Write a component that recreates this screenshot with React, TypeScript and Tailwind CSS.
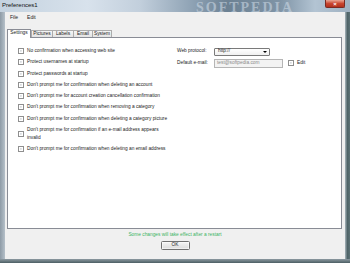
import React from "react";

function Check() {
  return (
    <div className="w-[6px] h-[6px] shrink-0 border border-[#8f8f8f] bg-white p-[1px]">
      <div className="w-full h-full bg-gradient-to-br from-[#cfd3d8] to-[#f4f4f4]" />
    </div>
  );
}

function Row({ children }: { children: React.ReactNode }) {
  return (
    <div className="flex items-center gap-[3px] whitespace-nowrap">
      <Check />
      <div className="leading-[8px]">{children}</div>
    </div>
  );
}

function Tab({ label, active }: { label: string; active?: boolean }) {
  return active ? (
    <div className="h-[9.5px] w-[24px] -mb-[1px] z-10 border border-b-0 border-[#898c95] bg-white flex items-center justify-center leading-none">
      {label}
    </div>
  ) : (
    <div className="h-[7px] border border-b-0 border-[#acacac] bg-gradient-to-b from-[#f6f6f6] to-[#e3e3e3] flex items-center justify-center leading-none -ml-[1px]">
      {label}
    </div>
  );
}

export default function App() {
  return (
    <div
      className="w-[350px] h-[263px] flex flex-col overflow-hidden relative bg-[#6f818c] text-[#1b1b1b]"
      style={{ fontFamily: '"Liberation Sans", Arial, sans-serif' }}
    >
      {/* title bar */}
      <div className="h-[12px] relative bg-[linear-gradient(to_right,#c4d2df_0%,#d8e2ec_25%,#c2cfdc_40%,#8ea2b4_55%,#6c8193_65%,#7f94a6_80%,#b3c4d3_90%,#9fb1c1_100%)]">
        <div className="absolute left-[2px] top-[1px] text-[6px] leading-[8px] text-[#111]">Preferences1</div>
        <div
          className="absolute left-[196px] top-[-3px] text-[14px] font-bold tracking-[2px] text-[#c9d6e2] opacity-60"
          style={{ fontFamily: '"Liberation Serif", serif' }}
        >
          SOFTPEDIA
        </div>
        <div className="absolute right-[5px] top-0 w-[20px] h-[8px] rounded-b-[2px] border border-t-0 border-[#7a2a22] bg-gradient-to-b from-[#e8a493] via-[#c9452f] to-[#b2301c] flex items-center justify-center text-white text-[6px] font-bold leading-none">
          ×
        </div>
      </div>
      <div className="flex flex-1">
        <div className="w-[5px] bg-gradient-to-r from-[#8e9ba6] to-[#b5c0c9]" />
        <div className="flex-1 bg-[#f0f0f0] flex flex-col text-[4.8px]">
          {/* menu */}
          <div className="h-[12px] flex items-center gap-[9px] pl-[5px] text-[5px]">
            <span>File</span>
            <span>Edit</span>
          </div>
          {/* tabs */}
          <div className="h-[4px]" />
          <div className="flex items-end ml-[2px] h-[9px]">
            <Tab label="Settings" active />
            <div className="w-[1px]" />
            <div className="flex items-end">
              <div className="w-[21px]"><Tab label="Pictures" /></div>
              <div className="w-[21px]"><Tab label="Labels" /></div>
              <div className="w-[19px]"><Tab label="Email" /></div>
              <div className="w-[19px]"><Tab label="System" /></div>
            </div>
          </div>
          {/* panel */}
          <div className="ml-[2px] w-[335px] h-[192px] border border-[#898c95] bg-white flex pt-[9px] pl-[10px]">
            <div className="flex flex-col gap-[3.3px] w-[159px]">
              <Row>No confirmation when accessing web site</Row>
              <Row>Protect usernames at startup</Row>
              <Row>Protect passwords at startup</Row>
              <Row>Don't prompt me for confirmation when deleting an account</Row>
              <Row>Don't prompt me for account creation cancellation confirmation</Row>
              <Row>Don't prompt me for confirmation when removing a category</Row>
              <Row>Don't prompt me for confirmation when deleting a category picture</Row>
              <Row>
                Don't prompt me for confirmation if an e-mail address appears
                <br />
                invalid
              </Row>
              <Row>Don't prompt me for confirmation when deleting an email address</Row>
            </div>
            <div className="flex flex-col gap-[2.5px] pt-[0.5px]">
              <div className="flex items-center">
                <div className="w-[37px] leading-none">Web protocol:</div>
                <div className="w-[56px] h-[8.5px] border border-[#7a7a7a] rounded-[1px] bg-gradient-to-b from-white to-[#f0f0f0] flex items-center justify-between pl-[3px] pr-[2px]">
                  <span className="leading-none">http://</span>
                  <div className="w-0 h-0 border-l-[2px] border-r-[2px] border-t-[2px] border-l-transparent border-r-transparent border-t-black" />
                </div>
              </div>
              <div className="flex items-center">
                <div className="w-[37px] leading-none">Default e-mail:</div>
                <div className="w-[69px] h-[9px] border border-[#b5b5b5] bg-[#f3f3f3] flex items-center pl-[2px] text-[#8a8a8a] leading-none">
                  test@softpedia.com
                </div>
                <div className="ml-[5px]"><Check /></div>
                <span className="ml-[3px] leading-none">Edit</span>
              </div>
            </div>
          </div>
          {/* bottom */}
          <div className="h-[8px] mt-[2px] flex items-center justify-center text-[#3cb464] leading-none">
            Some changes will take effect after a restart
          </div>
          <div className="flex justify-center mt-[2px]">
            <div className="w-[29px] h-[9px] border border-[#707070] rounded-[1.5px] bg-gradient-to-b from-[#f4f4f4] to-[#dcdcdc] flex items-center justify-center leading-none shadow-[inset_0_0_0_0.5px_#ffffff]">
              OK
            </div>
          </div>
        </div>
        <div className="w-[5px] bg-gradient-to-r from-[#a9b6bd] via-[#4f6468] to-[#5d7276]" />
      </div>
      <div className="h-[4px] bg-gradient-to-b from-[#8d9aa2] to-[#4d5f64]" />
    </div>
  );
}
